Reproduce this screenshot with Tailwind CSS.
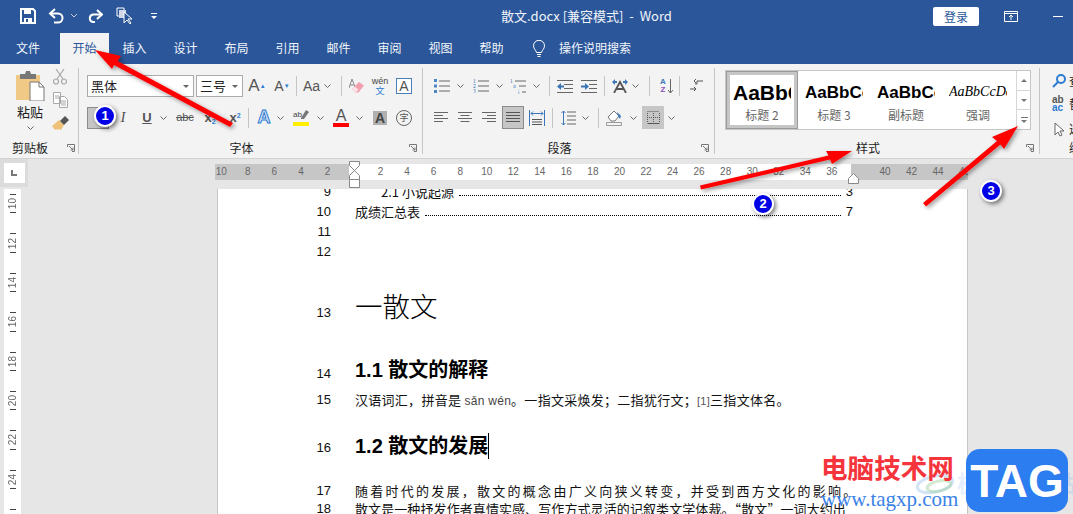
<!DOCTYPE html>
<html lang="zh">
<head>
<meta charset="UTF-8">
<title>散文.docx - Word</title>
<script src="https://cdn.jsdelivr.net/npm/@tailwindcss/browser@4"></script>
</head>
<body class="relative w-[1073px] h-[514px] overflow-hidden bg-[#e6e6e6] text-[12px] text-[#333] font-['Noto_Sans_CJK_SC','Liberation_Sans',sans-serif]">

<!-- 标题栏 -->
<div class="flex items-center h-[32px] bg-[#2b579a] text-white">
  <div class="flex items-center w-[400px] pl-[20px]">
    <svg class="w-[16px] h-[16px]" viewBox="0 0 16 16"><path d="M1 1h12l2 2v12H1z" fill="none" stroke="#fff" stroke-width="2"/><path d="M4 1h7v5H4zM4 10h8v5H4z" fill="#fff"/><path d="M6 11h2v3H6z" fill="#2b579a"/></svg>
    <svg class="w-[18px] h-[16px] ml-[12px]" viewBox="0 0 18 16" fill="none" stroke="#fff" stroke-width="2"><path d="M7 1 2 5.500l5 4.500"/><path d="M2 5.500h8a4.500 4.500 0 0 1 0 9H6"/></svg>
    <svg class="w-[6px] h-[4px] ml-[5px]" viewBox="0 0 6 4" fill="none" stroke="#ccd" stroke-width="1"><path d="m0 0 3 3 3-3"/></svg>
    <svg class="w-[16px] h-[14px] ml-[10px]" viewBox="0 0 16 14" fill="none" stroke="#fff" stroke-width="2"><path d="M10 1l5 4.500-5 4.500"/><path d="M15 5.500H6a3.800 3.800 0 0 0 0 7.500h2"/></svg>
    <svg class="w-[18px] h-[18px] ml-[13px]" viewBox="0 0 18 18"><path d="M1 1h7v6H5v2H1z" fill="none" stroke="#fff"/><path d="M3 3h7v8H3z" fill="#d0d8e8"/><path d="M8 5v11l3-3 3 4 1-1-3-4h4z" fill="#2b579a" stroke="#fff"/></svg>
    <svg class="w-[6px] h-[7px] ml-[17px]" viewBox="0 0 6 7" fill="#fff"><path d="M0 0h6v1H0zM0 3h6L3 6z"/></svg>
  </div>
  <div class="w-[340px] pl-[101px] text-[13px] whitespace-pre text-[#f2f5fa]">散文.docx [兼容模式]  -  Word</div>
  <div class="flex items-center">
    <div class="w-[46px] h-[19px] ml-[193px] bg-white rounded-[2px] text-[#2b579a] text-center leading-[19px]">登录</div>
    <svg class="w-[14px] h-[11px] ml-[25px]" viewBox="0 0 14 11" fill="none" stroke="#fff"><path d="M.5.500h13v10H.5zM.5 2.500h13M7 9V4.500M5 6l2-2 2 2"/></svg>
    <div class="w-[10px] h-px ml-[35px] bg-white"></div>
  </div>
</div>

<!-- 选项卡 -->
<div class="flex items-end h-[32px] bg-[#2b579a] text-[#f2f5fa]">
  <div class="w-[60px] h-[31px] pr-[4px] text-center leading-[30px]">文件</div>
  <div class="w-[49px] h-[31px] bg-[#f3f3f3] text-[#2b579a] text-center leading-[30px]">开始</div>
  <div class="w-[51px] h-[31px] text-center leading-[30px]">插入</div>
  <div class="w-[51px] h-[31px] text-center leading-[30px]">设计</div>
  <div class="w-[51px] h-[31px] text-center leading-[30px]">布局</div>
  <div class="w-[51px] h-[31px] text-center leading-[30px]">引用</div>
  <div class="w-[51px] h-[31px] text-center leading-[30px]">邮件</div>
  <div class="w-[51px] h-[31px] text-center leading-[30px]">审阅</div>
  <div class="w-[51px] h-[31px] text-center leading-[30px]">视图</div>
  <div class="w-[51px] h-[31px] text-center leading-[30px]">帮助</div>
  <div class="w-[28px] h-[31px] flex items-center justify-end">
    <svg class="w-[12px] h-[18px]" viewBox="0 0 12 18" fill="none" stroke="#fff"><path d="M3.500 12.500C3 10 .5 9 .5 5.800a5.500 5.500 0 0 1 11 0C11.500 9 9 10 8.500 12.500zM4 14.500h4M4.500 16.500h3"/></svg>
  </div>
  <div class="h-[31px] ml-[14px] leading-[30px]">操作说明搜索</div>
</div>

<!-- 功能区 -->
<div class="flex h-[95px] py-[4px] overflow-hidden bg-[#f3f3f3] border-b border-[#d2d2d2]">

  <!-- 剪贴板 -->
  <div class="flex flex-col shrink-0 w-[79px] border-r border-[#c6c6c6]">
    <div class="flex">
      <div class="flex flex-col items-center w-[50px] pl-[10px]">
        <svg class="w-[30px] h-[30px] mt-[3px]" viewBox="0 0 30 30"><path d="M1 4h24v25H1z" fill="#f0c987"/><path d="M5 3h5l1-3h4l1 3h5v5H5z" fill="#777"/><path d="M15 11h9l5 5v14H15z" fill="#fff" stroke="#777"/><path d="M24 11v5h5" fill="none" stroke="#777"/></svg>
        <div class="mt-[3px] text-[13px] leading-[16px] text-[#222]">粘贴</div>
        <svg class="w-[7px] h-[4px] mt-[6px]" viewBox="0 0 7 4" fill="none" stroke="#666"><path d="m.5.500 3 3 3-3"/></svg>
      </div>
      <div class="flex flex-col items-center w-[20px]">
        <svg class="w-[14px] h-[16px] mt-[1px]" viewBox="0 0 14 16" fill="none" stroke="#a8a8a8" stroke-width="1.200"><path d="M3 0l7 10M11 0 4 10"/><circle cx="3" cy="12.500" r="2.500"/><circle cx="11" cy="12.500" r="2.500"/></svg>
        <svg class="w-[15px] h-[16px] mt-[7px]" viewBox="0 0 15 16" fill="#fff" stroke="#a8a8a8"><path d="M.5.500h7v11h-7zM6.500 4.500h5l3 3v8h-8z"/><path d="M8 9h5M8 11h5M8 13h5M2 4h4M2 6h4" fill="none"/></svg>
        <svg class="w-[17px] h-[15px] mt-[8px]" viewBox="0 0 17 15"><path d="M0 10 7 4l5 5-3 5-2-1-1 1-2-1-1 1z" fill="#eec27a"/><path d="m8 5 5-5 4 4-5 5z" fill="#555"/></svg>
      </div>
    </div>
    <div class="flex items-center mt-auto h-[12px] leading-[12px]">
      <div class="w-[60px] text-center text-[#222]">剪贴板</div>
      <svg class="w-[8px] h-[8px] ml-[7px]" viewBox="0 0 8 8" fill="none" stroke="#777"><path d="M.5 3V.500h7v7H5M2 2l4 4M6 3.500V6H3.500"/></svg>
    </div>
  </div>

  <!-- 字体 -->
  <div class="flex flex-col shrink-0 w-[344px] border-r border-[#c6c6c6] pt-[7px] pl-[8px]">
    <div class="flex items-center h-[22px]">
      <div class="flex items-center justify-between w-[107px] h-[22px] px-[3px] bg-white border border-[#ababab] text-[13px] text-[#222]">黑体<span class="mr-[1px] border-x-[3px] border-t-[3px] border-x-transparent border-t-[#666]"></span></div>
      <div class="flex items-center justify-between w-[47px] h-[22px] ml-[2px] px-[3px] bg-white border border-[#ababab] text-[13px] text-[#222]">三号<span class="mr-[1px] border-x-[3px] border-t-[3px] border-x-transparent border-t-[#666]"></span></div>
      <div class="w-[26px] ml-[1px] text-center font-['Liberation_Sans'] text-[17px] text-[#555]">A<sup class="text-[6px] text-[#2b7cd3]">▲</sup></div>
      <div class="w-[24px] text-center font-['Liberation_Sans'] text-[14px] text-[#555]">A<sup class="text-[6px] text-[#2b7cd3]">▼</sup></div>
      <div class="w-px h-[20px] ml-[2px] bg-[#c6c6c6]"></div>
      <div class="w-[27px] pl-[6px] font-['Liberation_Sans'] text-[14px] text-[#555]">Aa</div>
      <svg class="w-[7px] h-[4px]" viewBox="0 0 7 4" fill="none" stroke="#666"><path d="m.5.500 3 3 3-3"/></svg>
      <div class="w-px h-[20px] ml-[10px] bg-[#c6c6c6]"></div>
      <svg class="w-[16px] h-[16px] ml-[7px]" viewBox="0 0 16 16"><path d="M0 10 3 1l3 8M1.200 7h3.600" fill="none" stroke="#888"/><path d="m3 11 7-7 5 3.500-5.500 7H6z" fill="#f2a0ae"/><path d="m3 11 2.500-2.500 4 3L7 14.500H6z" fill="#fbe3e7"/></svg>
      <div class="flex flex-col items-center w-[16px] ml-[7px] leading-[10px] font-['Liberation_Sans'] text-[9px] text-[#444]">wén<span class="font-['Noto_Sans_CJK_SC'] text-[#2b7cd3]">文</span></div>
      <div class="w-[16px] h-[16px] ml-[8px] border border-[#4a7ebb] bg-white text-center leading-[14px] font-['Liberation_Sans'] text-[14px] text-[#555]">A</div>
    </div>
    <div class="flex items-center h-[23px] mt-[9px] font-['Liberation_Sans'] text-[#555]">
      <div class="w-[22px] h-[22px] bg-[#c6c6c6] border border-[#8c8c8c]"></div>
      <div class="w-[26px] ml-[1px] text-center italic font-['Liberation_Serif'] text-[15px]">I</div>
      <div class="w-[22px] text-center underline font-bold text-[13px]">U</div>
      <svg class="w-[7px] h-[4px] ml-[2px]" viewBox="0 0 7 4" fill="none" stroke="#666"><path d="m.5.500 3 3 3-3"/></svg>
      <div class="w-[26px] ml-[5px] text-center line-through text-[11px]">abc</div>
      <div class="w-[24px] text-center font-bold text-[13px]">x<sub class="text-[7px] text-[#2b7cd3]">2</sub></div>
      <div class="w-[26px] text-center font-bold text-[13px]">x<sup class="text-[7px] text-[#2b7cd3]">2</sup></div>
      <div class="w-px h-[20px] bg-[#c6c6c6]"></div>
      <div class="w-[26px] ml-[2px] text-center font-bold text-[18px] text-[#dbe8f5] [-webkit-text-stroke:1px_#2b7cd3]">A</div>
      <svg class="w-[7px] h-[4px]" viewBox="0 0 7 4" fill="none" stroke="#666"><path d="m.5.500 3 3 3-3"/></svg>
      <div class="flex flex-col items-center w-[16px] ml-[9px]">
        <svg class="w-[16px] h-[12px]" viewBox="0 0 16 12"><path d="M8 9 13 1l3 2-5 7H8z" fill="#777"/><text x="0" y="8" font-size="8" fill="#444">ab</text></svg>
        <div class="w-[16px] h-[4px] mt-[1px] bg-[#ffee00]"></div>
      </div>
      <svg class="w-[7px] h-[4px] ml-[8px]" viewBox="0 0 7 4" fill="none" stroke="#666"><path d="m.5.500 3 3 3-3"/></svg>
      <div class="flex flex-col items-center w-[16px] ml-[9px] leading-[13px] text-[16px] text-[#555]">A<div class="w-[16px] h-[4px] mt-[1px] bg-[#ff0000]"></div></div>
      <svg class="w-[7px] h-[4px] ml-[7px]" viewBox="0 0 7 4" fill="none" stroke="#666"><path d="m.5.500 3 3 3-3"/></svg>
      <div class="w-[14px] h-[14px] ml-[10px] bg-[#b0b0b0] text-center leading-[14px] font-bold text-[14px] text-[#444]">A</div>
      <div class="w-[16px] h-[16px] ml-[9px] rounded-full border border-[#666] text-center leading-[14px] text-[9px] font-['Noto_Sans_CJK_SC'] text-[#555]">字</div>
    </div>
    <div class="flex items-center mt-auto -ml-[8px] h-[12px] leading-[12px]">
      <div class="flex-1 text-center text-[#222]">字体</div>
      <div class="w-[18px]"><svg class="w-[8px] h-[8px] ml-[5px]" viewBox="0 0 8 8" fill="none" stroke="#777"><path d="M.5 3V.500h7v7H5M2 2l4 4M6 3.500V6H3.500"/></svg></div>
    </div>
  </div>

  <!-- 段落 -->
  <div class="flex flex-col shrink-0 w-[292px] border-r border-[#c6c6c6] pt-[7px] pl-[11px]">
    <div class="flex items-center h-[22px]">
      <svg class="w-[16px] h-[14px]" viewBox="0 0 16 14"><path d="M5 2h11M5 7h11M5 12h11" stroke="#666"/><path d="M0 0h3v3H0zM0 5.500h3v3H0zM0 11h3v3H0z" fill="#4a86c8"/></svg>
      <svg class="w-[7px] h-[4px] ml-[7px]" viewBox="0 0 7 4" fill="none" stroke="#666"><path d="m.5.500 3 3 3-3"/></svg>
      <svg class="w-[16px] h-[14px] ml-[9px]" viewBox="0 0 16 14"><path d="M5 2h11M5 7h11M5 12h11" stroke="#666"/><text x="0" y="4" font-size="5" fill="#3a76b8">1</text><text x="0" y="9" font-size="5" fill="#3a76b8">2</text><text x="0" y="14" font-size="5" fill="#3a76b8">3</text></svg>
      <svg class="w-[7px] h-[4px] ml-[7px]" viewBox="0 0 7 4" fill="none" stroke="#666"><path d="m.5.500 3 3 3-3"/></svg>
      <svg class="w-[16px] h-[15px] ml-[7px]" viewBox="0 0 16 15"><path d="M5 2h11M9 7h7M12 13h4" stroke="#666"/><text x="0" y="4" font-size="5" fill="#3a76b8">1</text><text x="3" y="9" font-size="5" fill="#3a76b8">a</text><text x="8" y="15" font-size="5" fill="#3a76b8">i</text></svg>
      <svg class="w-[7px] h-[4px] ml-[7px]" viewBox="0 0 7 4" fill="none" stroke="#666"><path d="m.5.500 3 3 3-3"/></svg>
      <div class="w-px h-[20px] ml-[9px] bg-[#c6c6c6]"></div>
      <svg class="w-[16px] h-[13px] ml-[7px]" viewBox="0 0 16 13"><path d="M0 .500h16M7 4.500h9M7 8.500h9M0 12.500h16" stroke="#666"/><path d="M0 6.500 4 3v2.500h3v2H4V10z" fill="#3a76b8"/></svg>
      <svg class="w-[16px] h-[13px] ml-[8px]" viewBox="0 0 16 13"><path d="M0 .500h16M8 4.500h8M8 8.500h8M0 12.500h16" stroke="#666"/><path d="M8 6.500 4 3v2.500H0v2h4V10z" fill="#3a76b8"/></svg>
      <div class="w-px h-[20px] ml-[7px] bg-[#c6c6c6]"></div>
      <svg class="w-[16px] h-[14px] ml-[7px]" viewBox="0 0 16 14"><path d="M2 14 8 3l6 11M4.500 10h7" fill="none" stroke="#555" stroke-width="1.800"/><path d="M0 3 3 0v2h2v2H3v2zM16 3l-3-3v2h-2v2h2v2z" fill="#3a76b8"/></svg>
      <svg class="w-[7px] h-[4px] ml-[4px]" viewBox="0 0 7 4" fill="none" stroke="#666"><path d="m.5.500 3 3 3-3"/></svg>
      <div class="w-px h-[20px] ml-[10px] bg-[#c6c6c6]"></div>
      <div class="flex flex-col w-[8px] ml-[9px] text-center leading-[8px] font-['Liberation_Sans'] font-bold text-[8px]"><span class="text-[#3a76b8]">A</span><span class="text-[#8a4fc0]">Z</span></div>
      <svg class="w-[5px] h-[15px] ml-[1px]" viewBox="0 0 5 15" fill="none" stroke="#666"><path d="M2.500 0v14M0 11l2.500 3 2.500-3"/></svg>
      <div class="w-px h-[20px] ml-[6px] bg-[#c6c6c6]"></div>
      <svg class="w-[13px] h-[14px] ml-[10px]" viewBox="0 0 13 14" fill="none" stroke="#555"><path d="M13 2H7v3h-2M6 0 4 2l2 2M0 10h6M4 8l2 2-2 2"/></svg>
    </div>
    <div class="flex items-center h-[23px] mt-[9px]">
      <svg class="w-[14px] h-[11px]" viewBox="0 0 14 11" stroke="#666"><path d="M0 .500h14M0 3.500h9M0 6.500h14M0 9.500h9"/></svg>
      <svg class="w-[14px] h-[11px] ml-[10px]" viewBox="0 0 14 11" stroke="#666"><path d="M0 .500h14M2.500 3.500h9M0 6.500h14M2.500 9.500h9"/></svg>
      <svg class="w-[14px] h-[11px] ml-[10px]" viewBox="0 0 14 11" stroke="#666"><path d="M0 .500h14M5 3.500h9M0 6.500h14M5 9.500h9"/></svg>
      <div class="flex items-center justify-center w-[22px] h-[23px] ml-[6px] bg-[#c6c6c6] border border-[#8c8c8c]">
        <svg class="w-[14px] h-[11px]" viewBox="0 0 14 11" stroke="#555"><path d="M0 .500h14M0 3.500h14M0 6.500h14M0 9.500h14"/></svg>
      </div>
      <svg class="w-[16px] h-[16px] ml-[5px]" viewBox="0 0 16 16" fill="none"><path d="M.5 0v16M15.500 0v16" stroke="#3a76b8"/><path d="M3 9.500h10M3 12h10M3 14.500h10" stroke="#555"/><path d="M2 3.500h12M4 1.500l-2 2 2 2M12 1.500l2 2-2 2" stroke="#3a76b8"/></svg>
      <div class="w-px h-[20px] ml-[7px] bg-[#c6c6c6]"></div>
      <svg class="w-[15px] h-[16px] ml-[8px]" viewBox="0 0 15 16" fill="none"><path d="M6 2h9M6 6h9M6 10h9M6 14h9" stroke="#666"/><path d="M2.500 1v14M.5 3l2-2 2 2M.5 13l2 2 2-2" stroke="#3a76b8"/></svg>
      <svg class="w-[7px] h-[4px] ml-[6px]" viewBox="0 0 7 4" fill="none" stroke="#666"><path d="m.5.500 3 3 3-3"/></svg>
      <div class="w-px h-[20px] ml-[9px] bg-[#c6c6c6]"></div>
      <svg class="w-[16px] h-[16px] ml-[7px]" viewBox="0 0 16 16"><path d="M.5 12.500h15v3H.5z" fill="#f4f4f4" stroke="#999"/><path d="m2 7 6-6 5 5-4 5H5z" fill="#fff" stroke="#777"/><path d="M11 2l4 4-1 3-2-3z" fill="#3a76b8"/></svg>
      <svg class="w-[7px] h-[4px] ml-[8px]" viewBox="0 0 7 4" fill="none" stroke="#666"><path d="m.5.500 3 3 3-3"/></svg>
      <div class="flex items-center justify-center w-[22px] h-[23px] ml-[5px] bg-[#c6c6c6]">
        <svg class="w-[13px] h-[13px]" viewBox="0 0 13 13" fill="none" stroke="#555"><path d="M.5 12.500h12" /><path d="M.5.500h12M.5 2v9M6.500 2v9M12.500 2v9M2 6.500h9" stroke-dasharray="1 1"/></svg>
      </div>
      <svg class="w-[7px] h-[4px] ml-[4px]" viewBox="0 0 7 4" fill="none" stroke="#666"><path d="m.5.500 3 3 3-3"/></svg>
    </div>
    <div class="flex items-center mt-auto -ml-[11px] h-[12px] leading-[12px]">
      <div class="flex-1 text-center text-[#222]">段落</div>
      <div class="w-[18px]"><svg class="w-[8px] h-[8px] ml-[5px]" viewBox="0 0 8 8" fill="none" stroke="#777"><path d="M.5 3V.500h7v7H5M2 2l4 4M6 3.500V6H3.500"/></svg></div>
    </div>
  </div>

  <!-- 样式 -->
  <div class="flex flex-col shrink-0 w-[325px] border-r border-[#c6c6c6] pt-[2px] pl-[10px]">
    <div class="flex w-[306px] h-[60px] bg-white border border-[#c6c6c6]">
      <div class="flex flex-col items-center w-[72px] h-[58px] border border-[#9a9a9a] outline-[3px] -outline-offset-[4px] outline-[#c6c6c6]">
        <div class="w-[58px] h-[32px] mt-[4px] overflow-hidden whitespace-nowrap leading-[34px] font-['Liberation_Sans'] font-bold text-[21px] text-black">AaBbC</div>
        <div class="text-[#666] leading-[14px]">标题 2</div>
      </div>
      <div class="flex flex-col items-center w-[72px]">
        <div class="w-[58px] h-[32px] mt-[5px] overflow-hidden whitespace-nowrap leading-[34px] font-['Liberation_Sans'] font-bold text-[17px] text-black">AaBbCc</div>
        <div class="text-[#666] leading-[14px]">标题 3</div>
      </div>
      <div class="flex flex-col items-center w-[72px]">
        <div class="w-[58px] h-[32px] mt-[5px] overflow-hidden whitespace-nowrap leading-[34px] font-['Liberation_Sans'] font-bold text-[17px] text-black">AaBbCc</div>
        <div class="text-[#666] leading-[14px]">副标题</div>
      </div>
      <div class="flex flex-col items-center w-[72px]">
        <div class="w-[58px] h-[32px] mt-[5px] overflow-hidden whitespace-nowrap leading-[32px] font-['Liberation_Serif'] italic text-[14px] text-black">AaBbCcDd</div>
        <div class="text-[#666] leading-[14px]">强调</div>
      </div>
      <div class="flex flex-col w-[15px] ml-auto -mr-px border-l border-[#d6d6d6]">
        <div class="flex items-center justify-center h-[20px] border-b border-[#d6d6d6]"><span class="border-x-[3px] border-b-[3px] border-x-transparent border-b-[#777]"></span></div>
        <div class="flex items-center justify-center h-[19px] border-b border-[#d6d6d6]"><span class="border-x-[3px] border-t-[3px] border-x-transparent border-t-[#777]"></span></div>
        <div class="flex flex-col items-center justify-center h-[19px] gap-[2px]"><span class="w-[7px] h-px bg-[#777]"></span><span class="border-x-[3px] border-t-[3px] border-x-transparent border-t-[#777]"></span></div>
      </div>
    </div>
    <div class="flex items-center mt-auto -ml-[10px] h-[12px] leading-[12px]">
      <div class="flex-1 text-center text-[#222]">样式</div>
      <div class="w-[18px]"><svg class="w-[8px] h-[8px] ml-[5px]" viewBox="0 0 8 8" fill="none" stroke="#777"><path d="M.5 3V.500h7v7H5M2 2l4 4M6 3.500V6H3.500"/></svg></div>
    </div>
  </div>

  <!-- 编辑 -->
  <div class="flex flex-col shrink-0 pt-[2px] pl-[12px]">
    <div class="flex items-center h-[22px] whitespace-nowrap">
      <svg class="w-[14px] h-[14px]" viewBox="0 0 14 14" fill="none" stroke="#2b7cd3" stroke-width="2"><circle cx="9" cy="5" r="4"/><path d="m6 8-5 5"/></svg><span class="ml-[3px] text-[#222]">查找</span>
    </div>
    <div class="flex items-center h-[24px] whitespace-nowrap">
      <div class="w-[16px] leading-[8px] font-['Liberation_Sans'] font-bold text-[10px] text-[#555]">ab<br><span class="text-[#2b7cd3]">ac</span></div><span class="ml-[1px] text-[#222]">替换</span>
    </div>
    <div class="flex items-center h-[26px] whitespace-nowrap">
      <svg class="w-[12px] h-[15px] ml-[2px]" viewBox="0 0 12 15" fill="#fff" stroke="#666"><path d="M1 1v12l3-3 2 4 2-1-2-4h4z"/></svg><span class="ml-[3px] text-[#222]">选择</span>
    </div>
    <div class="mt-auto ml-[17px] h-[12px] leading-[12px] text-[#222]">编辑</div>
  </div>
</div>

<!-- 标尺 -->
<div class="flex h-[30px]">
  <div class="flex items-center justify-center w-[28px] h-[28px] bg-[#dcdcdc]">
    <div class="flex items-center justify-center w-[21px] h-[20px] bg-white"><div class="w-[6px] h-[6px] border-l-2 border-b-2 border-[#777]"></div></div>
  </div>
  <div class="relative w-[753px] h-[16px] mt-[5px] ml-[187px] overflow-hidden bg-[linear-gradient(90deg,#c6c6c6_134px,#fff_134px,#fff_636px,#c6c6c6_636px)] font-['Liberation_Sans'] text-[10px] leading-[16px] text-[#666]">
    <div class="flex -ml-[7px] w-[800px] text-center">
      <span class="w-[26.55px]">10</span><span class="w-[26.55px]">8</span><span class="w-[26.55px]">6</span><span class="w-[26.55px]">4</span><span class="w-[26.55px]">2</span><span class="w-[26.55px]"></span><span class="w-[26.55px]">2</span><span class="w-[26.55px]">4</span><span class="w-[26.55px]">6</span><span class="w-[26.55px]">8</span><span class="w-[26.55px]">10</span><span class="w-[26.55px]">12</span><span class="w-[26.55px]">14</span><span class="w-[26.55px]">16</span><span class="w-[26.55px]">18</span><span class="w-[26.55px]">20</span><span class="w-[26.55px]">22</span><span class="w-[26.55px]">24</span><span class="w-[26.55px]">26</span><span class="w-[26.55px]">28</span><span class="w-[26.55px]">30</span><span class="w-[26.55px]">32</span><span class="w-[26.55px]">34</span><span class="w-[26.55px]">36</span><span class="w-[26.55px]"></span><span class="w-[26.55px]">40</span><span class="w-[26.55px]">42</span><span class="w-[26.55px]">44</span><span class="w-[26.55px]">46</span>
    </div>
  </div>
</div>

<!-- 文档区 -->
<div class="flex h-[325px]">
  <div class="flex flex-col w-[17px] h-[325px] ml-[4px] overflow-hidden bg-white">
    <div class="flex flex-col items-center -mt-[5px] font-['Liberation_Sans'] text-[10px] text-[#666]">
      <div class="flex flex-col items-center justify-between h-[39.4px] py-[10px]"><span class="w-[6px] h-px bg-[#444]"></span><span class="leading-[10px] [writing-mode:vertical-rl] rotate-180">10</span><span class="w-[6px] h-px bg-[#444]"></span></div>
      <div class="flex flex-col items-center justify-between h-[39.4px] py-[10px]"><span class="w-[6px] h-px bg-[#444]"></span><span class="leading-[10px] [writing-mode:vertical-rl] rotate-180">12</span><span class="w-[6px] h-px bg-[#444]"></span></div>
      <div class="flex flex-col items-center justify-between h-[39.4px] py-[10px]"><span class="w-[6px] h-px bg-[#444]"></span><span class="leading-[10px] [writing-mode:vertical-rl] rotate-180">14</span><span class="w-[6px] h-px bg-[#444]"></span></div>
      <div class="flex flex-col items-center justify-between h-[39.4px] py-[10px]"><span class="w-[6px] h-px bg-[#444]"></span><span class="leading-[10px] [writing-mode:vertical-rl] rotate-180">16</span><span class="w-[6px] h-px bg-[#444]"></span></div>
      <div class="flex flex-col items-center justify-between h-[39.4px] py-[10px]"><span class="w-[6px] h-px bg-[#444]"></span><span class="leading-[10px] [writing-mode:vertical-rl] rotate-180">18</span><span class="w-[6px] h-px bg-[#444]"></span></div>
      <div class="flex flex-col items-center justify-between h-[39.4px] py-[10px]"><span class="w-[6px] h-px bg-[#444]"></span><span class="leading-[10px] [writing-mode:vertical-rl] rotate-180">20</span><span class="w-[6px] h-px bg-[#444]"></span></div>
      <div class="flex flex-col items-center justify-between h-[39.4px] py-[10px]"><span class="w-[6px] h-px bg-[#444]"></span><span class="leading-[10px] [writing-mode:vertical-rl] rotate-180">22</span><span class="w-[6px] h-px bg-[#444]"></span></div>
      <div class="flex flex-col items-center justify-between h-[39.4px] py-[10px]"><span class="w-[6px] h-px bg-[#444]"></span><span class="leading-[10px] [writing-mode:vertical-rl] rotate-180">24</span><span class="w-[6px] h-px bg-[#444]"></span></div>
      <div class="flex flex-col items-center justify-between h-[39.4px] py-[10px]"><span class="w-[6px] h-px bg-[#444]"></span><span></span><span></span></div>
    </div>
  </div>

  <div class="w-[751px] h-[325px] ml-[196px] overflow-hidden bg-white border-x border-[#c6c6c6] text-[13px] text-[#111]">
    <div class="-mt-[7px]">
      <div class="flex items-center h-[20px]">
        <span class="w-[113px] text-right font-['Liberation_Sans']">9</span>
        <div class="flex items-center w-[498px] ml-[24px] pl-[26px]">
          <span class="whitespace-nowrap">2.1 小说起源</span>
          <span class="flex-1 h-[7px] mx-[5px] border-b border-dotted border-black"></span>
          <span class="font-['Liberation_Sans']">3</span>
        </div>
      </div>
      <div class="flex items-center h-[20px]">
        <span class="w-[113px] text-right font-['Liberation_Sans']">10</span>
        <div class="flex items-center w-[498px] ml-[24px]">
          <span class="whitespace-nowrap">成绩汇总表</span>
          <span class="flex-1 h-[7px] mx-[5px] border-b border-dotted border-black"></span>
          <span class="font-['Liberation_Sans']">7</span>
        </div>
      </div>
      <div class="flex items-center h-[20px]"><span class="w-[113px] text-right font-['Liberation_Sans']">11</span></div>
      <div class="flex items-center h-[20px]"><span class="w-[113px] text-right font-['Liberation_Sans']">12</span></div>
      <div class="flex items-center h-[102px]">
        <span class="w-[113px] text-right font-['Liberation_Sans']">13</span>
        <span class="ml-[24px] mb-[14px] text-[27.5px] font-light text-black">一散文</span>
      </div>
      <div class="flex items-center h-[20px]">
        <span class="w-[113px] text-right font-['Liberation_Sans']">14</span>
        <span class="ml-[24px] mb-[8px] text-[20px] font-bold text-black font-['Liberation_Sans','Noto_Sans_CJK_SC']">1.1 散文的解释</span>
      </div>
      <div class="flex items-center h-[20px] mt-[6px]">
        <span class="w-[113px] text-right font-['Liberation_Sans']">15</span>
        <span class="ml-[24px] whitespace-nowrap tracking-[0.28px]">汉语词汇，拼音是 <span class="text-[12px] text-[#444] font-['Liberation_Sans']">sǎn wén</span>。一指文采焕发；二指犹行文；<span class="text-[11px] text-[#555] font-['Liberation_Sans']">[1]</span>三指文体名。</span>
      </div>
      <div class="flex items-center h-[30px] mt-[23px]">
        <span class="w-[113px] text-right font-['Liberation_Sans']">16</span>
        <span class="ml-[24px] mb-[4px] text-[20px] font-bold text-black font-['Liberation_Sans','Noto_Sans_CJK_SC']">1.2 散文的发展</span>
        <span class="w-px h-[26px] mb-[4px] bg-black"></span>
      </div>
      <div class="flex items-center h-[18px] mt-[19px]">
        <span class="w-[113px] text-right font-['Liberation_Sans']">17</span>
        <span class="ml-[24px] whitespace-nowrap tracking-[2.26px]">随着时代的发展，散文的概念由广义向狭义转变，并受到西方文化的影响。</span>
      </div>
      <div class="flex items-center h-[18px]">
        <span class="w-[113px] text-right font-['Liberation_Sans']">18</span>
        <span class="ml-[24px] whitespace-nowrap tracking-[0.09px]">散文是一种抒发作者真情实感、写作方式灵活的记叙类文学体裁。“散文”一词大约出</span>
      </div>
    </div>
  </div>
</div>

<!-- 标尺滑块 -->
<svg class="absolute left-[349px] top-[161px] w-[12px] h-[28px]" viewBox="0 0 12 28" fill="#fff" stroke="#888"><path d="M.5.500h10v4l-5 5-5-5zM5.500 9.500l5 5v4h-10v-4zM.5 18.500h10v8h-10z"/></svg>
<svg class="absolute left-[848px] top-[173px] w-[12px] h-[11px]" viewBox="0 0 12 11" fill="#fff" stroke="#888"><path d="M.5 10.500v-5l5-5 5 5v5z"/></svg>

<!-- 水印 -->
<div class="absolute left-[957px] top-[465px] text-[23px] font-bold text-[#2b7df0]/15 tracking-[1px] whitespace-nowrap">极光下载站</div>
<svg class="absolute left-[915px] top-[472px] w-[42px] h-[26px]" viewBox="0 0 42 26" fill="none" stroke-width="3"><ellipse cx="20" cy="12" rx="18" ry="8" stroke="#9cc3e8" stroke-opacity=".45" transform="rotate(-12 20 12)"/><ellipse cx="24" cy="14" rx="12" ry="5" stroke="#9ccf9c" stroke-opacity=".45" transform="rotate(-12 24 14)"/></svg>
<div class="absolute left-[821px] top-[453px] text-[26.6px] leading-[28px] font-bold text-[#f5343c] whitespace-nowrap">电脑技术网</div>
<div class="absolute left-[821px] top-[486px] text-[21px] leading-[26px] font-['Liberation_Serif'] text-[#3b82e6] whitespace-nowrap">www.tagxp.com</div>
<div class="absolute left-[966px] top-[449px] flex items-center justify-center w-[102px] h-[63px] rounded-[14px] bg-[#2b7df0] font-['Liberation_Sans'] font-bold text-[46px] leading-none text-white">TAG</div>

<!-- 箭头标注 -->
<svg class="absolute left-0 top-0 w-[1073px] h-[514px] pointer-events-none" viewBox="0 0 1073 514">
  <defs><filter id="sh" x="-20%" y="-20%" width="140%" height="140%"><feDropShadow dx="2" dy="2" stdDeviation="2" flood-color="#000" flood-opacity=".4"/></filter></defs>
  <g fill="#f00" filter="url(#sh)">
    <path d="M95 50 121 56 117.500 61 233 123 230 127 114 65 112 69z"/>
    <path d="M852 151 826 151 828.500 155.500 700 185.500 701 189.500 830 159.500 832 164z"/>
    <path d="M1018 126 992 137 997 141 923 203 926 206.500 1000.500 144.500 1004 149z"/>
  </g>
</svg>
<div class="absolute left-[94px] top-[105px] flex items-center justify-center w-[22px] h-[22px] rounded-full bg-[#0000e6] border-2 border-white shadow-[2px_2px_4px_rgba(0,0,0,.5)] font-['Liberation_Sans'] font-bold text-[13px] text-white">1</div>
<div class="absolute left-[752px] top-[193px] flex items-center justify-center w-[22px] h-[22px] rounded-full bg-[#0000e6] border-2 border-white shadow-[2px_2px_4px_rgba(0,0,0,.5)] font-['Liberation_Sans'] font-bold text-[13px] text-white">2</div>
<div class="absolute left-[980px] top-[180px] flex items-center justify-center w-[22px] h-[22px] rounded-full bg-[#0000e6] border-2 border-white shadow-[2px_2px_4px_rgba(0,0,0,.5)] font-['Liberation_Sans'] font-bold text-[13px] text-white">3</div>

</body>
</html>
